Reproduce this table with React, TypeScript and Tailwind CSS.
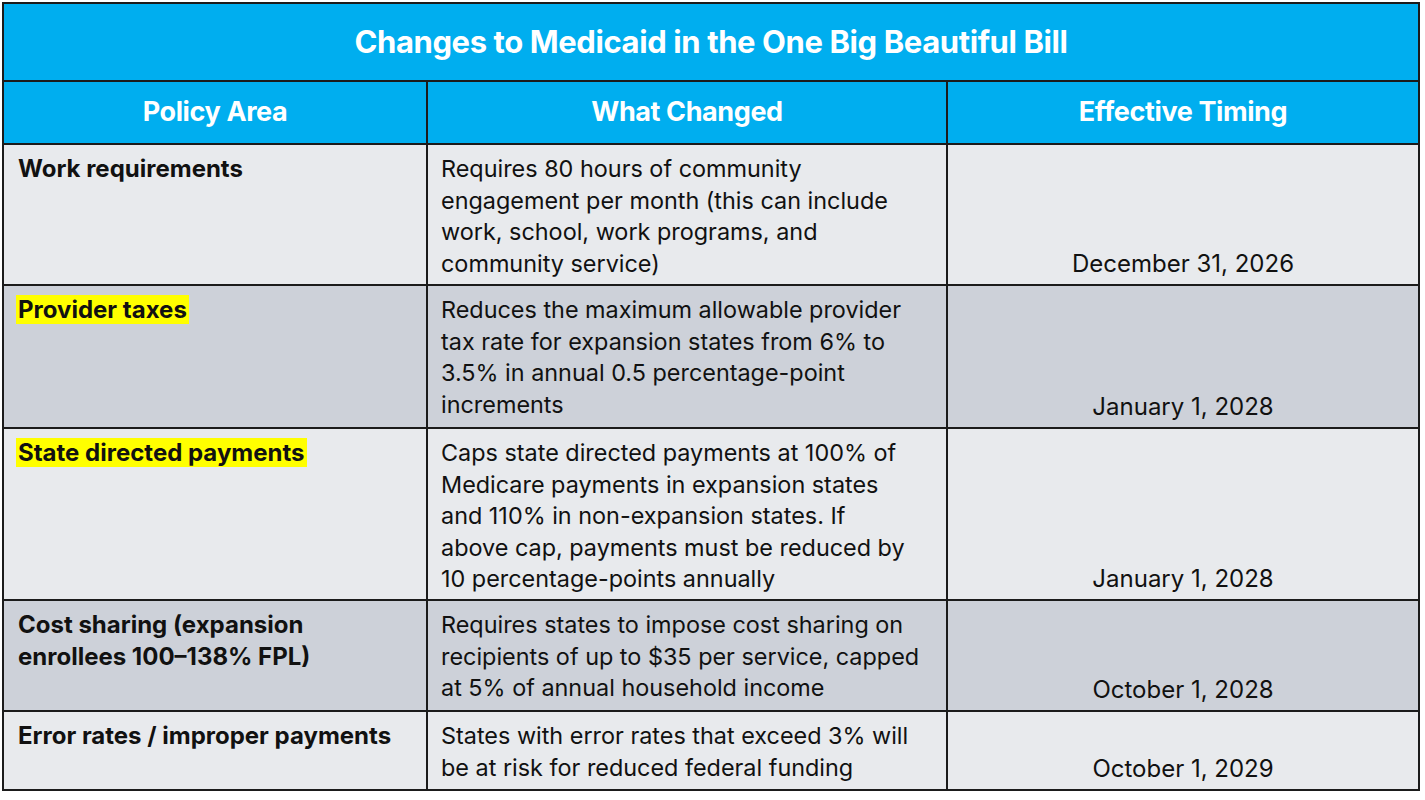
const rows = [
  {
    area: ["Work requirements"],
    highlight: false,
    change: [
      "Requires 80 hours of community",
      "engagement per month (this can include",
      "work, school, work programs, and",
      "community service)",
    ],
    timing: "December 31, 2026",
    shade: "bg-[#e8eaed]",
    h: "h-[141px]",
  },
  {
    area: ["Provider taxes"],
    highlight: true,
    change: [
      "Reduces the maximum allowable provider",
      "tax rate for expansion states from 6% to",
      "3.5% in annual 0.5 percentage-point",
      "increments",
    ],
    timing: "January 1, 2028",
    shade: "bg-[#cdd1d9]",
    h: "h-[143px]",
  },
  {
    area: ["State directed payments"],
    highlight: true,
    change: [
      "Caps state directed payments at 100% of",
      "Medicare payments in expansion states",
      "and 110% in non-expansion states. If",
      "above cap, payments must be reduced by",
      "10 percentage-points annually",
    ],
    timing: "January 1, 2028",
    shade: "bg-[#e8eaed]",
    h: "h-[172px]",
  },
  {
    area: ["Cost sharing (expansion", "enrollees 100–138% FPL)"],
    highlight: false,
    change: [
      "Requires states to impose cost sharing on",
      "recipients of up to $35 per service, capped",
      "at 5% of annual household income",
    ],
    timing: "October 1, 2028",
    shade: "bg-[#cdd1d9]",
    h: "h-[111px]",
  },
  {
    area: ["Error rates / improper payments"],
    highlight: false,
    change: ["States with error rates that exceed 3% will", "be at risk for reduced federal funding"],
    timing: "October 1, 2029",
    shade: "bg-[#e8eaed]",
    h: "h-[79px]",
  },
];

export default function App() {
  return (
    <div className="w-[1425px] h-[800px] bg-white pt-[2px] pl-[2px] font-['Inter',sans-serif] text-[#111]">
      <table className="w-[1416px] border-collapse table-fixed">
        <colgroup>
          <col className="w-[424px]" />
          <col className="w-[520px]" />
          <col className="w-[472px]" />
        </colgroup>
        <thead>
          <tr className="h-[78px] bg-[#00aeef]">
            <th colSpan={3} className="border-2 border-[#1b1b1b] text-white text-[31px] font-bold tracking-[-0.4px] text-center">
              Changes to Medicaid in the One Big Beautiful Bill
            </th>
          </tr>
          <tr className="h-[63px] bg-[#00aeef] text-white text-[27px] font-bold tracking-[-0.4px]">
            <th className="border-2 border-[#1b1b1b]">Policy Area</th>
            <th className="border-2 border-[#1b1b1b]">What Changed</th>
            <th className="border-2 border-[#1b1b1b]">Effective Timing</th>
          </tr>
        </thead>
        <tbody>
          {rows.map((r) => (
            <tr key={r.timing + r.area[0]} className={`${r.shade} ${r.h} leading-[31.5px]`}>
              <td className="border-2 border-[#1b1b1b] align-top pl-[14px] pr-2 pt-[8px] text-[24px] font-bold">
                {r.area.map((line) => (
                  <div key={line} className="whitespace-nowrap">
                    <span className={r.highlight ? "bg-[#ffff00] px-[2px] -mx-[2px]" : ""}>{line}</span>
                  </div>
                ))}
              </td>
              <td className="border-2 border-[#1b1b1b] align-top pl-[13px] pr-2 pt-[8px] text-[23.4px]">
                {r.change.map((line) => (
                  <div key={line} className="whitespace-nowrap">{line}</div>
                ))}
              </td>
              <td className="border-2 border-[#1b1b1b] align-bottom text-center pb-[5px] text-[24px]">{r.timing}</td>
            </tr>
          ))}
        </tbody>
      </table>
    </div>
  );
}
